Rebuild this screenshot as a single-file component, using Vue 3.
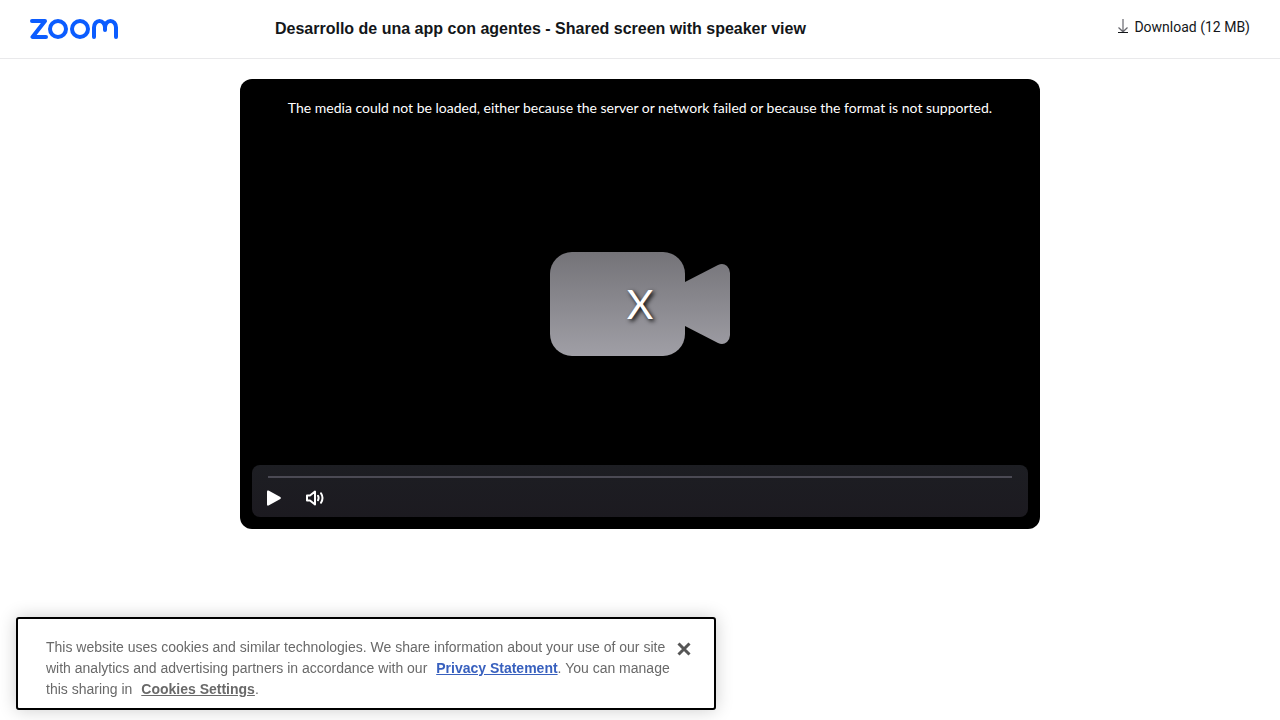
<script setup>
const title = 'Desarrollo de una app con agentes - Shared screen with speaker view'
const errorText = 'The media could not be loaded, either because the server or network failed or because the format is not supported.'
</script>

<template>
  <div class="page">
    <header class="header">
      <a class="logo" href="#" aria-label="Zoom">
        <svg width="88" height="20" viewBox="0 0 88 20" fill="none" stroke="#0b5cff" stroke-width="4" stroke-linecap="round" stroke-linejoin="round">
          <path d="M2 2H15L2.500 18H16" />
          <circle cx="28" cy="10" r="8" />
          <circle cx="50" cy="10" r="8" />
          <path d="M64 18V8.500a5.500 6.500 0 0 1 11 0V11M75 8.500a5.500 6.500 0 0 1 11 0V18" />
        </svg>
      </a>
      <h1 class="title">{{ title }}</h1>
      <a class="download" href="#">
        <svg width="12" height="16" viewBox="0 0 12 16" fill="none" aria-hidden="true">
          <path d="M6 0V12.500M1.500 8.500L6 12.800L10.500 8.500" stroke="#68686f" stroke-width="1.200" />
          <path d="M1 13.500H11" stroke="#131619" />
        </svg>
        <span>Download (12 MB)</span>
      </a>
    </header>

    <main class="main">
      <section class="player" aria-label="Video Player">
        <p class="message">{{ errorText }}</p>
        <div class="poster">
          <svg width="180" height="104" viewBox="0 0 180 104" aria-hidden="true">
            <defs>
              <linearGradient id="camera" gradientUnits="userSpaceOnUse" x1="0" y1="0" x2="0" y2="104">
                <stop offset="0" stop-color="#747378" />
                <stop offset="1" stop-color="#a09fa6" />
              </linearGradient>
            </defs>
            <rect width="135" height="104" rx="22" fill="url(#camera)" />
            <path d="M135 30L168 13Q173 10.500 177 14Q180 17 180 21V83Q180 87 177 90Q173 93.500 168 91L135 74Z" fill="url(#camera)" />
          </svg>
          <span class="cross">X</span>
        </div>
        <div class="controls">
          <div class="track"></div>
          <div class="buttons">
            <button type="button" aria-label="Play">
              <svg width="16" height="16" viewBox="0 0 16 16"><path d="M1 1.500Q1 0 2.500.600L14.300 7Q15.700 8 14.300 9L2.500 15.500Q1 16 1 14.500Z" fill="#fff" /></svg>
            </button>
            <button type="button" aria-label="Mute">
              <svg width="20" height="16" viewBox="0 0 20 16" fill="none" stroke="#fff" stroke-width="2" stroke-linejoin="round">
                <path d="M2 5.500H5L10 1.500V14.500L5 10.500H2Z" />
                <path d="M13 5.800Q14.200 8 13 10.200M16 3.300Q19 8 16 12.700" stroke-linecap="round" />
              </svg>
            </button>
          </div>
        </div>
      </section>
    </main>

    <aside class="cookies" role="dialog" aria-label="Cookies">
      <p>
        This website uses cookies and similar technologies. We share information about your use of our site
        with analytics and advertising partners in accordance with our
        <a class="privacy" href="#">Privacy Statement</a>. You can manage
        this sharing in <a class="settings" href="#">Cookies Settings</a>.
      </p>
      <button class="close" type="button" aria-label="Close">
        <svg width="14" height="14" viewBox="0 0 14 14" fill="none" stroke="#565656" stroke-width="3"><path d="M1.500 1.500L12.500 12.500M12.500 1.500L1.500 12.500" /></svg>
      </button>
    </aside>
  </div>
</template>

<style>
body {
  background: #fff;
}
</style>

<style scoped>
.page {
  color: #131619;
  font-family: "Liberation Sans", Arial, sans-serif;
  font-size: 14px;
}

.header {
  display: flex;
  align-items: center;
  box-sizing: border-box;
  height: 59px;
  padding: 0 30px;
  border-bottom: 1px solid #e9e9eb;
}

.logo {
  display: flex;
  width: 245px;
}

.title {
  flex: 1;
  margin: 0;
  font-size: 16px;
  line-height: 24px;
  font-weight: 700;
}

.download {
  display: flex;
  align-items: center;
  gap: 5px;
  padding-bottom: 4px;
  color: inherit;
  font-family: Roboto, "Liberation Sans", sans-serif;
  line-height: 20px;
  text-decoration: none;
}

.main {
  padding: 20px;
}

.player {
  display: flex;
  flex-direction: column;
  box-sizing: border-box;
  max-width: 800px;
  aspect-ratio: 16 / 9;
  margin: 0 auto;
  padding: 19px 12px 12px;
  border-radius: 12px;
  background: #000;
  color: #fff;
}

.message {
  margin: 0;
  font-family: Lato, sans-serif;
  font-size: 14px;
  line-height: 20px;
  text-align: center;
}

.poster {
  display: grid;
  flex: 1;
  place-items: center;
  padding-top: 24px;
}

.poster > * {
  grid-area: 1 / 1;
}

.cross {
  font-family: Lato, sans-serif;
  font-size: 41px;
  line-height: 40px;
  text-shadow: 2px 2px 4px #000;
}

.controls {
  box-sizing: border-box;
  height: 52px;
  padding: 11px 16px 0;
  border-radius: 8px;
  background: linear-gradient(#1d1e23, #1c1a20);
}

.track {
  height: 2px;
  background: #4b4a54;
}

.buttons {
  display: flex;
  gap: 23px;
  margin: 12px 0 0 -2px;
}

button {
  display: flex;
  padding: 0;
  border: 0;
  background: none;
  cursor: pointer;
}

.cookies {
  position: fixed;
  bottom: 10px;
  left: 16px;
  box-sizing: border-box;
  width: 700px;
  max-width: calc(100% - 32px);
  padding: 18px 28px 8px;
  border: 2px solid #000;
  border-radius: 3px;
  background: #fff;
  box-shadow: 0 0 18px rgba(0, 0, 0, 0.2);
  color: #696969;
}

.cookies p {
  margin: 0;
  line-height: 21px;
}

.cookies a {
  margin-left: 5px;
  font-weight: 700;
}

.privacy {
  color: #3860be;
}

.settings {
  color: #696969;
}

.close {
  position: absolute;
  top: 23px;
  right: 23px;
}
</style>
